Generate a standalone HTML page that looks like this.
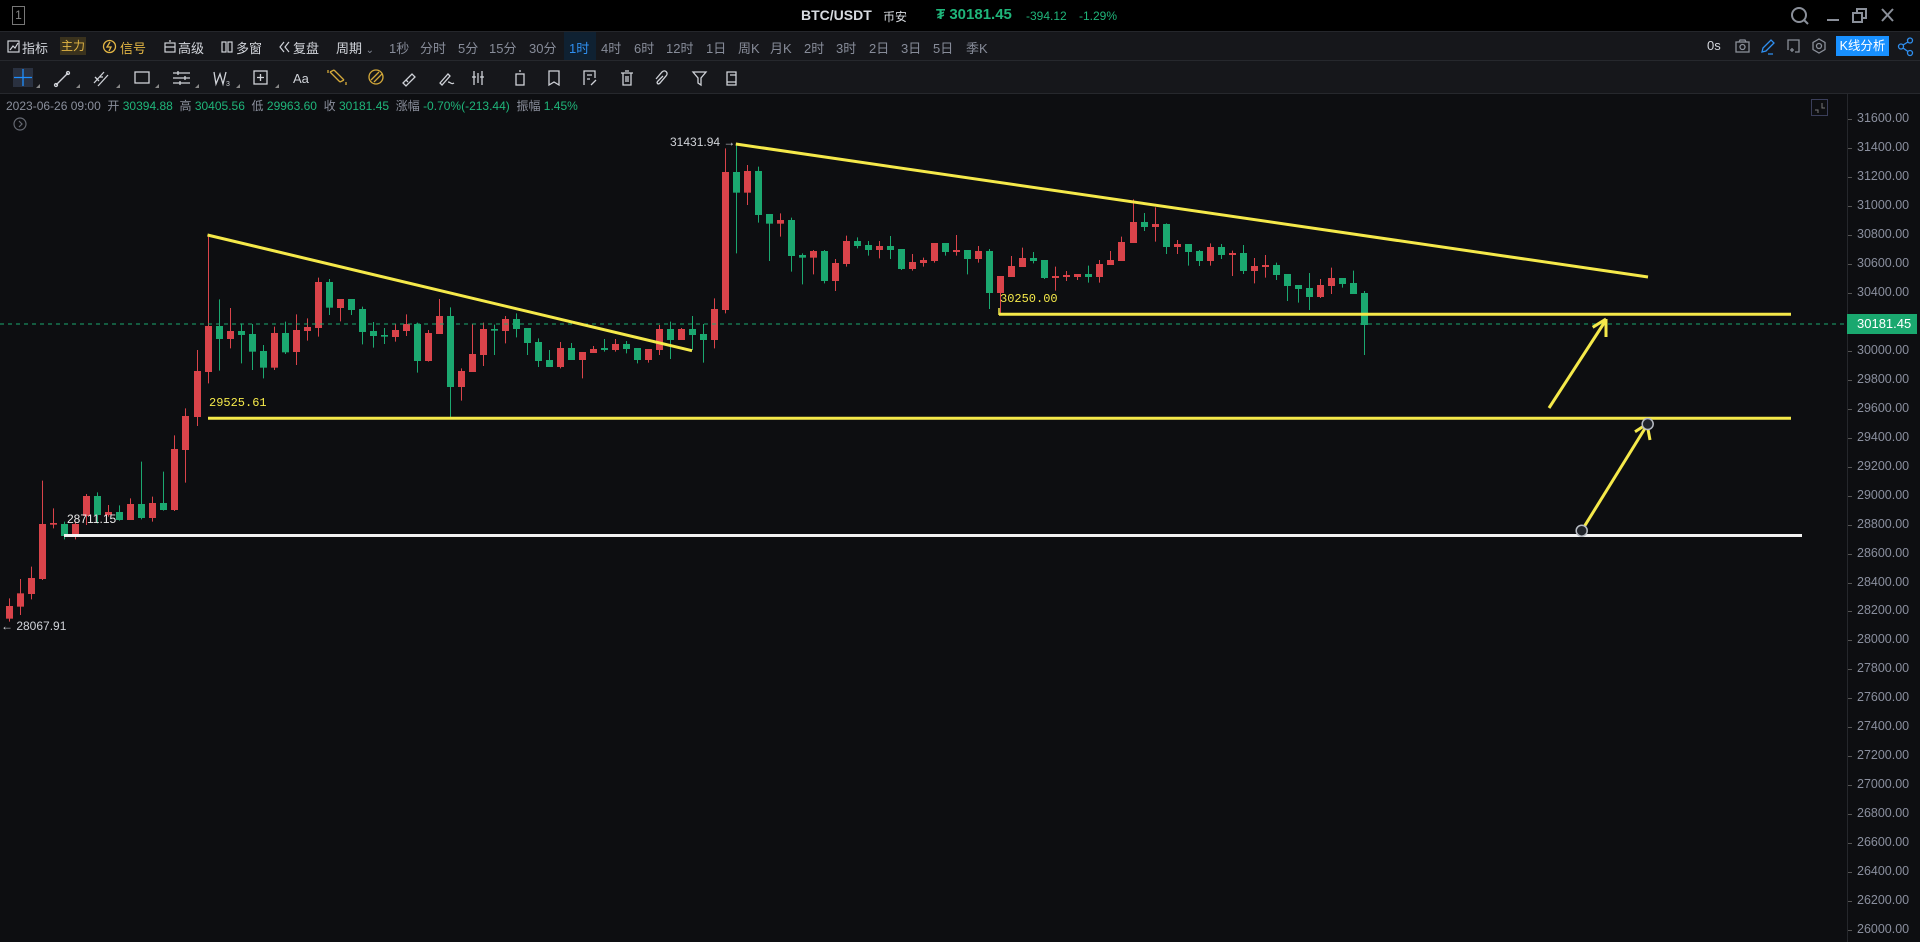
<!DOCTYPE html>
<html><head><meta charset="utf-8">
<style>
*{margin:0;padding:0;box-sizing:border-box}
body{width:1920px;height:942px;background:#0d0e11;overflow:hidden;position:relative;font-family:"Liberation Sans","Noto Sans CJK SC",sans-serif}
.abs{position:absolute;white-space:nowrap}
#title{position:absolute;left:0;top:0;width:1920px;height:31px;background:#000}
#tb1{position:absolute;left:0;top:31px;width:1920px;height:30px;background:#16171b;border-top:1px solid #24262b;border-bottom:1px solid #26282d}
#tb2{position:absolute;left:0;top:61px;width:1920px;height:33px;background:#16171b;border-bottom:1px solid #26282d}
.t1{top:38px;font-size:13px;color:#d2d5db}
.g{color:#878c99}
.info{top:97px;font-size:12px;color:#8a8f9c}
.gr{color:#1fb57a}
.ax{left:1857px;font-size:12.5px;color:#8a8f9e;font-family:"Liberation Sans",sans-serif}
</style></head><body>
<div id="title"></div>
<div class="abs" style="left:12px;top:6px;width:13px;height:19px;border:1px solid #777;color:#888;font-size:12px;text-align:center;line-height:17px">1</div>
<div class="abs" style="left:801px;top:7px;font-size:14px;font-weight:bold;color:#d8dbe0">BTC/USDT</div>
<div class="abs" style="left:883px;top:8px;font-size:12px;color:#d8dbe0">币安</div>
<div class="abs" style="left:936px;top:6px;font-size:15px;font-weight:bold;color:#1fb57a">₮ 30181.45</div>
<div class="abs" style="left:1026px;top:9px;font-size:12px;color:#1fb57a">-394.12</div>
<div class="abs" style="left:1079px;top:9px;font-size:12px;color:#1fb57a">-1.29%</div>
<svg class="abs" style="left:1790px;top:6px" width="120" height="20" fill="none" stroke="#8a8f99" stroke-width="2">
<circle cx="9" cy="9" r="7"/><path d="M14 14l4 4"/>
<path d="M37 14h12"/>
<rect x="63" y="7" width="9" height="9"/><path d="M67 7V3h9v9h-4"/>
<path d="M92 3l11 12M103 3L92 15"/>
</svg>

<div id="tb1"></div>
<svg class="abs" style="left:7px;top:40px" width="14" height="14" fill="none" stroke="#cfd2d8" stroke-width="1.2"><rect x="1" y="1" width="11" height="11"/><path d="M3 10l3-4 2 2 3-5"/></svg>
<div class="abs t1" style="left:22px">指标</div>
<div class="abs" style="left:60px;top:37px;width:26px;height:18px;background:#3a321d;color:#e2b544;font-size:12px;text-align:center;line-height:18px">主力</div>
<svg class="abs" style="left:102px;top:39px" width="15" height="15" fill="none" stroke="#e2b544" stroke-width="1.3"><circle cx="7.5" cy="7.5" r="6"/><path d="M8 3L5 8h4l-2 4"/></svg>
<div class="abs t1" style="left:120px;color:#e2b544">信号</div>
<svg class="abs" style="left:164px;top:40px" width="12" height="13" fill="none" stroke="#cfd2d8" stroke-width="1.2"><rect x="1" y="3" width="10" height="9"/><path d="M1 7h10M5 1h2"/></svg>
<div class="abs t1" style="left:178px">高级</div>
<svg class="abs" style="left:221px;top:41px" width="12" height="12" fill="none" stroke="#cfd2d8" stroke-width="1.2"><rect x="1" y="1" width="4" height="10"/><rect x="7" y="1" width="4" height="10"/></svg>
<div class="abs t1" style="left:236px">多窗</div>
<svg class="abs" style="left:279px;top:41px" width="12" height="12" fill="none" stroke="#cfd2d8" stroke-width="1.2"><path d="M5 1L1 6l4 5M10 1L6 6l4 5"/></svg>
<div class="abs t1" style="left:293px">复盘</div>
<div class="abs t1" style="left:336px">周期 <span style="font-size:10px" class="g">⌄</span></div>
<div class="abs" style="left:564px;top:32px;width:32px;height:28px;background:#0f2132"></div>
<div class="abs t1 g" style="left:389px">1秒</div>
<div class="abs t1 g" style="left:420px">分时</div>
<div class="abs t1 g" style="left:458px">5分</div>
<div class="abs t1 g" style="left:489px">15分</div>
<div class="abs t1 g" style="left:529px">30分</div>
<div class="abs t1" style="left:569px;color:#2f8ff0">1时</div>
<div class="abs t1 g" style="left:601px">4时</div>
<div class="abs t1 g" style="left:634px">6时</div>
<div class="abs t1 g" style="left:666px">12时</div>
<div class="abs t1 g" style="left:706px">1日</div>
<div class="abs t1 g" style="left:738px">周K</div>
<div class="abs t1 g" style="left:770px">月K</div>
<div class="abs t1 g" style="left:804px">2时</div>
<div class="abs t1 g" style="left:836px">3时</div>
<div class="abs t1 g" style="left:869px">2日</div>
<div class="abs t1 g" style="left:901px">3日</div>
<div class="abs t1 g" style="left:933px">5日</div>
<div class="abs t1 g" style="left:966px">季K</div>
<div class="abs t1" style="left:1707px">0s</div>
<svg class="abs" style="left:1735px;top:38px" width="100" height="18" fill="none" stroke-width="1.3">
<g stroke="#8a8f99"><rect x="1" y="4" width="13" height="10"/><circle cx="7.5" cy="9" r="2.5"/><path d="M4 4l1-2h5l1 2"/></g>
<g stroke="#2f8ff0"><path d="M27 14l1-4 8-8 3 3-8 8z M33 16h5"/></g>
<g stroke="#8a8f99"><path d="M53 12V2h11v12h-4M55 12h4M57 10v4"/><path d="M84 1l6 3.5v7L84 15l-6-3.5v-7z"/><circle cx="84" cy="8" r="2.5"/></g>
</svg>
<div class="abs" style="left:1836px;top:36px;width:53px;height:20px;background:#1890ff;color:#fff;font-size:12.5px;text-align:center;line-height:20px">K线分析</div>
<svg class="abs" style="left:1897px;top:37px" width="18" height="20" fill="none" stroke="#2f8ff0" stroke-width="1.3"><circle cx="13" cy="3.5" r="2.5"/><circle cx="4" cy="9.5" r="2.5"/><circle cx="13" cy="16" r="2.5"/><path d="M6 8l5-3M6 11l5 3.5"/></svg>

<div id="tb2"></div>
<svg class="abs" style="left:0;top:61px" width="760" height="33" fill="none" stroke="#cfd2d8" stroke-width="1.3">
<rect x="13" y="7" width="20" height="19" fill="#2a3140" stroke="none"/><path d="M23 8v17M14 16.5h18" stroke="#1e8fff"/>
<g fill="#888" stroke="none"><path d="M36 27h4v-4z M76 27h4v-4z M116 27h4v-4z M155 27h4v-4z M195 27h4v-4z M236 27h4v-4z M275 27h4v-4z"/></g>
<path d="M56 24l12-12"/><circle cx="56" cy="24" r="1.5"/><circle cx="68" cy="12" r="1.5"/>
<path d="M94 22l10-11M98 25l10-11M95 16l4 4M103 16l-3 0"/>
<rect x="135" y="11" width="14" height="11"/>
<path d="M173 12h17M173 17h17M173 22h17M178 10v4M185 15v4M180 20v4"/>
<path d="M214 11l2 12 4-10 3 10 3-12" /><text x="226" y="25" font-size="7" fill="#cfd2d8" stroke="none">3</text>
<rect x="254" y="10" width="13" height="13"/><path d="M257 16.5h7M260.5 13v7"/>
<text x="293" y="22" font-size="13" fill="#cfd2d8" stroke="none" font-family="Liberation Sans">Aa</text>
<g stroke="#d4a93a"><path d="M330 11l10 10M334 9l10 10M330 11l4-2M340 21l4-2M328 9v3M346 21v3"/><circle cx="376" cy="16" r="7"/><path d="M371 19l8-8M374 21l8-8"/></g>
<path d="M403 22l9-9 3 3-9 9zM406 19l2 2"/>
<path d="M440 22l8-9 2 2-8 9zM448 21c3 0 3 3 6 1"/>
<path d="M474 10v14M482 10v14M478 12v10M472 16h4M480 16h4"/>
<rect x="516" y="13" width="8" height="11"/><path d="M519 10h2"/>
<path d="M549 24V10h10v14l-5-3z"/>
<path d="M584 24V10h11v7M587 14h5M587 18h3M591 24l5-5"/>
<path d="M621 12h12M625 10h4M623 12v12h8V12M626 15v6M628 15v6"/>
<path d="M656 18l6-7c3-3 7 1 4 4l-6 7c-2 2-4 0-2-2l5-5"/>
<path d="M693 11h13l-5 6v7l-3-2v-5z"/>
<path d="M727 11h9v10h-9zM730 14h6v10h-9v-4"/>
</svg>

<div class="abs info" style="left:6px">2023-06-26 09:00 &nbsp;开 <span class="gr">30394.88</span> &nbsp;高 <span class="gr">30405.56</span> &nbsp;低 <span class="gr">29963.60</span> &nbsp;收 <span class="gr">30181.45</span> &nbsp;涨幅 <span class="gr">-0.70%(-213.44)</span> &nbsp;振幅 <span class="gr">1.45%</span></div>
<svg class="abs" style="left:13px;top:117px" width="14" height="14" fill="none" stroke="#666a73" stroke-width="1.2"><circle cx="7" cy="7" r="6"/><path d="M6 4l3 3-3 3"/></svg>
<svg class="abs" style="left:1811px;top:99px" width="18" height="18" fill="none" stroke="#3a3e5a"><rect x="0.5" y="0.5" width="16" height="16"/><path d="M11 4v5h3M4 11h3v3" stroke="#777"/></svg>

<svg id="chart" class="abs" style="left:0;top:94px" width="1920" height="848"></svg>

<div class="abs" style="left:1847px;top:94px;width:1px;height:848px;background:#25272c"></div>
<div id="axis"></div>
<div class="abs" style="left:1847px;top:314px;width:70px;height:20px;background:#1aa86f;color:#fff;font-size:13px;line-height:20px;padding-left:10px">30181.45</div>

<script>
var NS="http://www.w3.org/2000/svg",svg=document.getElementById('chart'),OY=94;
function el(t,a){var e=document.createElementNS(NS,t);for(var k in a)e.setAttribute(k,a[k]);svg.appendChild(e);return e;}
var R="#d9434a",G="#1ba870";
var z3=[[20,1278,1316,1255,1325,'r'],[44,1240,1280,1197,1305,'r'],[68,1194,1242,1160,1258,'r'],[92,1032,1197,902,1200,'r'],[116,1029,1034,985,1045,'r'],[140,1032,1068,1025,1078,'g'],[164,1032,1062,1025,1078,'r'],[188,948,1008,942,1035,'r'],[212,948,1005,937,1030,'g'],[236,996,1005,975,1010,'r'],[260,996,1020,976,1022,'g'],[284,972,1020,955,1020,'r'],[308,972,1014,845,1018,'g'],[332,969,1014,950,1025,'r'],[356,969,990,875,992,'g'],[380,807,990,766,993,'r'],[404,708,810,685,908,'r'],[428,573,711,510,738,'r'],[452,438,576,165,610,'r'],[476,438,477,358,572,'g'],[500,453,477,384,505,'r'],[524,453,465,430,550,'g'],[548,462,515,432,570,'g'],[572,513,563,495,595,'g'],[596,459,563,440,570,'r'],[620,459,517,425,522,'g'],[644,450,516,403,555,'r'],[668,441,453,415,482,'r'],[692,306,444,293,470,'r'],[716,306,383,297,405,'g'],[740,357,384,357,424,'r'],[764,357,390,357,405,'g'],[788,387,456,380,493,'g'],[812,453,468,426,503,'g'],[836,465,470,444,492,'g'],[860,450,471,432,485,'r'],[884,432,453,403,468,'r'],[908,432,543,428,578,'g'],[932,459,543,450,545,'r'],[956,408,462,357,462,'r'],[980,408,621,382,711,'g'],[1004,573,621,565,662,'r'],[1028,522,576,432,558,'r'],[1052,447,525,428,558,'r'],[1076,447,452,434,525,'g'],[1100,417,453,408,490,'r'],[1124,417,447,400,472,'g'],[1148,444,489,444,525,'g'],[1172,486,543,475,561,'g'],[1196,540,561,510,561,'g'],[1220,504,561,486,565,'r'],[1244,504,540,489,540,'g'],[1268,516,540,516,595,'r'],[1292,507,519,498,519,'r'],[1316,504,510,477,515,'g'],[1340,492,510,477,515,'r'],[1364,492,507,483,520,'g'],[1388,504,540,504,550,'g'],[1412,507,540,507,548,'r'],[1436,447,510,435,525,'r'],[1460,447,480,425,537,'g'],[1484,447,480,444,480,'r'],[1508,447,465,408,510,'g'],[1532,462,480,432,548,'g'],[1556,387,480,355,505,'r']];
var z4=[[54,156,570,85,580,'r'],[78,156,218,70,400,'g'],[102,153,218,135,255,'r'],[126,153,285,140,308,'g'],[150,282,311,282,423,'g'],[174,300,311,280,350,'r'],[198,300,408,293,455,'g'],[222,405,413,400,493,'g'],[246,393,413,390,463,'r'],[270,393,483,390,490,'g'],[294,429,483,417,513,'r'],[318,363,432,347,440,'r'],[342,363,378,352,385,'g'],[366,375,390,363,407,'g'],[390,378,390,363,415,'r'],[414,378,390,348,417,'g'],[438,387,447,387,450,'g'],[462,426,447,402,452,'r'],[486,420,429,413,440,'r'],[510,369,423,369,428,'r'],[534,369,396,369,407,'g'],[558,390,396,345,407,'r'],[582,390,417,390,463,'g'],[606,393,417,378,428,'r'],[630,393,519,387,567,'g'],[654,468,519,468,585,'r'],[678,438,471,408,471,'r'],[702,414,441,383,441,'r'],[726,414,423,396,430,'g'],[750,420,474,420,477,'g'],[774,468,474,440,512,'r'],[798,465,471,453,483,'r'],[822,462,471,462,480,'r'],[846,462,471,437,488,'g'],[870,432,471,420,488,'r'],[894,420,435,393,435,'r'],[918,366,423,350,423,'r'],[942,306,369,238,369,'r'],[966,306,321,279,333,'g'],[990,312,321,262,365,'r'],[1014,312,381,310,402,'g'],[1038,372,381,360,402,'r'],[1062,372,396,372,437,'g'],[1086,393,423,390,438,'g'],[1110,381,423,370,437,'r'],[1134,381,405,372,417,'g'],[1158,399,405,392,468,'r'],[1182,399,453,375,462,'g'],[1206,438,453,414,490,'r'],[1230,435,441,405,473,'r'],[1254,435,465,428,480,'g'],[1278,462,498,462,543,'g'],[1302,495,507,495,548,'g'],[1326,504,531,459,570,'g'],[1350,495,531,477,534,'r'],[1374,474,498,443,522,'r'],[1398,474,492,474,503,'g'],[1422,489,522,452,522,'g'],[1446,519,615,513,705,'g']];
function draw(x,t,b,wt,wb,c){var col=c=='r'?R:G;x=Math.round(x)+0.5;
el('line',{x1:x,x2:x,y1:wt-OY,y2:wb-OY,stroke:col,'stroke-width':1});
el('rect',{x:x-3.5,y:t-OY,width:7,height:Math.max(1.5,b-t),fill:col});}
z3.forEach(function(c){draw(c[0]/2.178,180+c[1]/3,180+c[2]/3,180+c[3]/3,180+c[4]/3,c[5]);});
z4.forEach(function(c){draw(700+c[0]/2.178,120+c[1]/3,120+c[2]/3,120+c[3]/3,120+c[4]/3,c[5]);});
el('line',{x1:0,x2:1847,y1:324-OY,y2:324-OY,stroke:'#1aa86f','stroke-dasharray':'4 4','stroke-width':1});
var Y="#f5e94a";
function L(x1,y1,x2,y2,c,w){el('line',{x1:x1,y1:y1-OY,x2:x2,y2:y2-OY,stroke:c,'stroke-width':w||3,'stroke-linecap':'butt'});}
L(207.5,235,692,350.7,Y,3);
L(735.8,144,1648,277,Y,3);
L(999,314.3,1791,314.3,Y,3);
L(999,308,999,315,Y,1.5);
L(208,418.3,1791,418.3,Y,3);
L(64,535.5,1802,535.5,'#f2f2f2',3);
L(1549,408,1606,320,Y,3);L(1606,319,1592.7,327.3,Y,3);L(1606,319,1606,337,Y,3);
L(1581.7,530.7,1647.7,424,Y,3);L(1647,424,1635,431.7,Y,3);L(1647,424,1650,440,Y,3);
[[1581.7,530.7],[1647.7,424]].forEach(function(p){el('circle',{cx:p[0],cy:p[1]-OY,r:5.5,fill:'#20232a',stroke:'#b8bcc4','stroke-width':1.5});});
function T(x,y,s,c,f){var e=el('text',{x:x,y:y-OY,fill:c,'font-size':12,'font-family':f||'Liberation Mono, monospace'});e.textContent=s;}
T(670,146,'31431.94 →','#d0d3d9','Liberation Sans, sans-serif');
T(209,406,'29525.61',Y);
T(1000,302,'30250.00',Y);
T(67,523,'28711.15','#e8e8e8','Liberation Sans, sans-serif');
T(1,630,'← 28067.91','#d0d3d9','Liberation Sans, sans-serif');
var ax=document.getElementById('axis'),h='';
for(var i=0;i<=28;i++){var p=31600-i*200,y=119.3+i*28.95;
if(Math.abs(y-324)<12)continue;
h+='<div class="abs ax" style="top:'+(y-8)+'px">'+p.toFixed(2)+'</div><div class="abs" style="left:1848px;top:'+y+'px;width:4px;height:1px;background:#555"></div>';}
ax.innerHTML=h;
</script>
</body></html>
